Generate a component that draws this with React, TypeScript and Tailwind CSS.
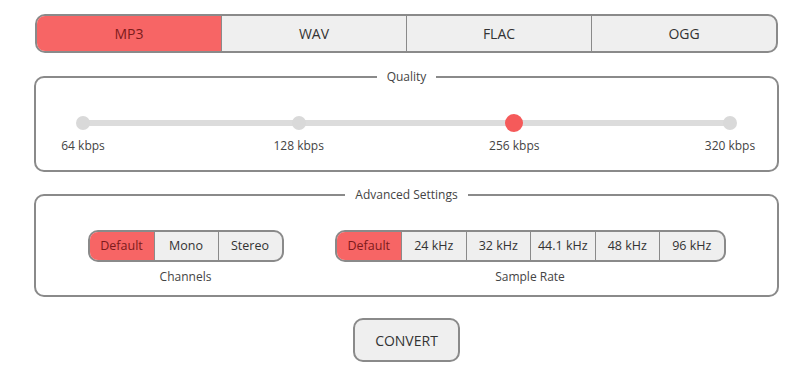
import { useState } from 'react'

const FORMATS = ['MP3', 'WAV', 'FLAC', 'OGG']
const QUALITIES = ['64 kbps', '128 kbps', '256 kbps', '320 kbps']
const CHANNELS = ['Default', 'Mono', 'Stereo']
const RATES = ['Default', '24 kHz', '32 kHz', '44.1 kHz', '48 kHz', '96 kHz']

function Segmented({
  items,
  value,
  onChange,
  label,
  itemClass,
}: {
  items: string[]
  value: number
  onChange: (i: number) => void
  label: string
  itemClass: string
}) {
  return (
    <div className="flex flex-col items-center">
      <div className="flex h-[32px] overflow-hidden rounded-[10px] border-2 border-[#8a8a8a] bg-[#efefef]">
        {items.map((it, i) => (
          <button
            key={it}
            onClick={() => onChange(i)}
            className={
              itemClass +
              ' text-[12.5px] ' +
              (i > 0 ? 'border-l border-[#8a8a8a] ' : '') +
              (i === value ? 'bg-[#f76565] text-[#7d1b1b]' : 'text-[#333]')
            }
          >
            {it}
          </button>
        ))}
      </div>
      <p className="mt-[7px] text-[12px] leading-[16px] text-[#444]">{label}</p>
    </div>
  )
}

export default function App() {
  const [format, setFormat] = useState(0)
  const [quality, setQuality] = useState(2)
  const [channel, setChannel] = useState(0)
  const [rate, setRate] = useState(0)

  return (
    <div className="h-[390px] w-[800px] bg-white font-['Open_Sans',sans-serif]">
      <div className="ml-[34px] flex w-[745px] flex-col pt-[14px]">
        {/* format tabs */}
        <div className="mx-px flex h-[39px] overflow-hidden rounded-[10px] border-2 border-[#8a8a8a] bg-[#efefef]">
          {FORMATS.map((f, i) => (
            <button
              key={f}
              onClick={() => setFormat(i)}
              className={
                'flex-1 text-[14px] ' +
                (i > 0 ? 'border-l border-[#8a8a8a] ' : '') +
                (i === format ? 'bg-[#f76565] text-[#7d1b1b]' : 'text-[#333]')
              }
            >
              {f}
            </button>
          ))}
        </div>

        {/* quality */}
        <fieldset className="mt-[16px] rounded-[10px] border-2 border-[#8a8a8a] px-[47px] pb-[16px]">
          <legend className="mx-auto px-[10px] text-[12px] leading-[16px] text-[#444]">Quality</legend>
          <div className="relative mt-[29px] flex h-[18px] items-center justify-between">
            <div className="absolute inset-x-0 top-1/2 h-[6px] -translate-y-1/2 rounded-full bg-[#dcdcdc]" />
            {QUALITIES.map((q, i) => (
              <div key={q} className="relative flex w-0 justify-center">
                <button
                  onClick={() => setQuality(i)}
                  className={
                    'shrink-0 rounded-full ' +
                    (i === quality ? 'h-[18px] w-[18px] bg-[#f55a5a]' : 'h-[14px] w-[14px] bg-[#d9d9d9]')
                  }
                />
              </div>
            ))}
          </div>
          <div className="mt-[6px] flex justify-between">
            {QUALITIES.map((q) => (
              <div key={q} className="flex w-0 justify-center">
                <span className="whitespace-nowrap text-[12px] leading-[16px] text-[#444]">{q}</span>
              </div>
            ))}
          </div>
        </fieldset>

        {/* advanced */}
        <fieldset className="mt-[15px] rounded-[10px] border-2 border-[#8a8a8a] pb-[10px]">
          <legend className="mx-auto px-[10px] text-[12px] leading-[16px] text-[#444]">Advanced Settings</legend>
          <div className="mt-[27px] flex justify-center gap-[51px]">
            <Segmented items={CHANNELS} value={channel} onChange={setChannel} label="Channels" itemClass="w-[64px]" />
            <Segmented items={RATES} value={rate} onChange={setRate} label="Sample Rate" itemClass="w-[64.5px]" />
          </div>
        </fieldset>

        <div className="mt-[21px] flex justify-center">
          <button className="h-[44px] w-[107px] rounded-[10px] border-2 border-[#8a8a8a] bg-[#efefef] text-[14px] text-[#333]">
            CONVERT
          </button>
        </div>
      </div>
    </div>
  )
}
